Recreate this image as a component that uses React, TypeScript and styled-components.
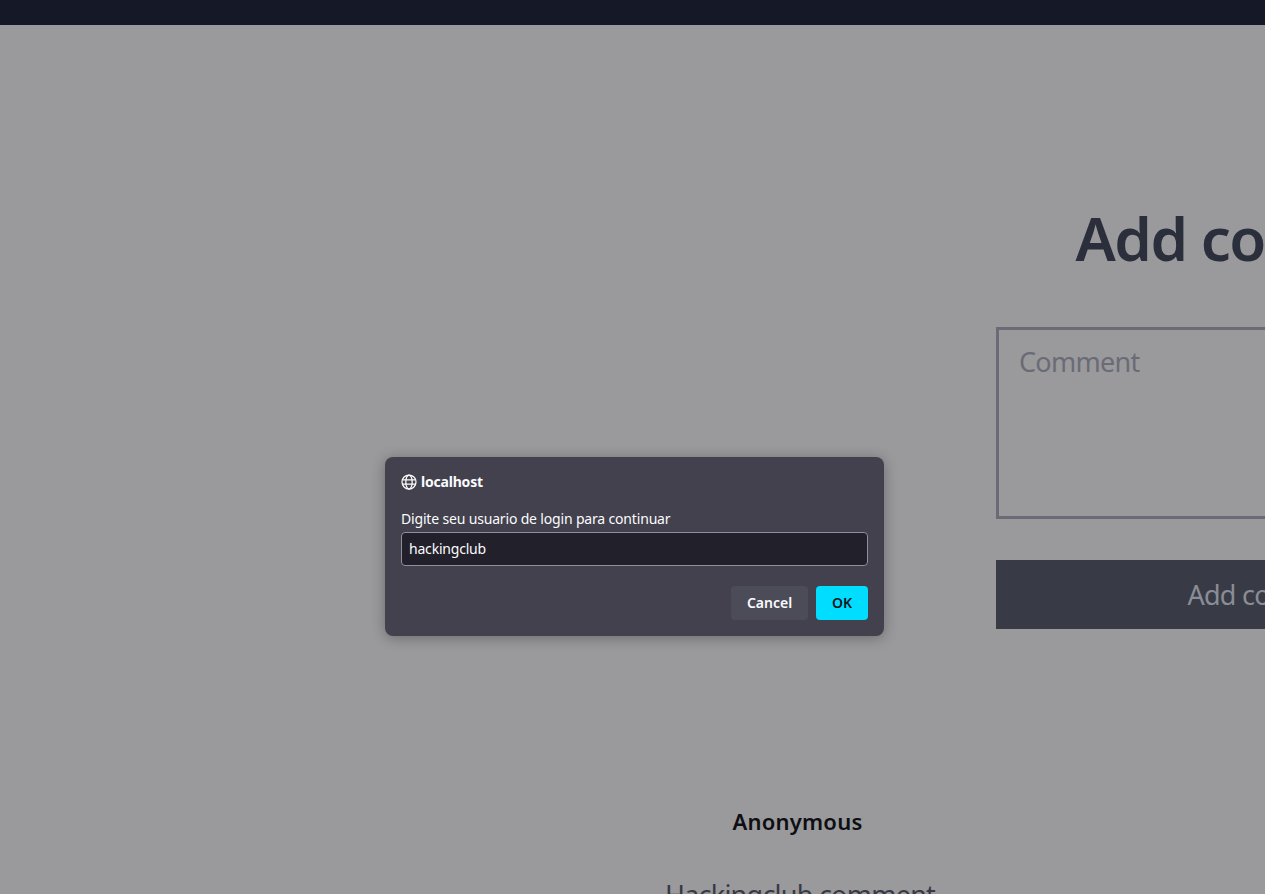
import React from "react";
import styled, { createGlobalStyle } from "styled-components";

const Global = createGlobalStyle`
  html, body { margin: 0; padding: 0; height: 100%; overflow: hidden; background: #9a9a9c; }
  #root { height: 100%; }
  * { box-sizing: border-box; }
`;

const Shell = styled.div`
  position: relative;
  width: 1265px;
  height: 894px;
  overflow: hidden;
  display: flex;
  flex-direction: column;
  font-family: "Noto Sans", sans-serif;
  background: #9a9a9c;
`;

const TopBar = styled.header`
  flex: 0 0 25px;
  background: #151826;
`;

const Page = styled.main`
  flex: 1;
  width: 1600px;
  display: flex;
  flex-direction: column;
`;

const FormSection = styled.section`
  width: 554px;
  margin-left: 996px;
  padding-top: 174px;
  display: flex;
  flex-direction: column;
`;

const Title = styled.h1`
  margin: 0 0 47px;
  height: 81px;
  font-size: 60px;
  line-height: 79px;
  font-weight: 600;
  letter-spacing: -1.45px;
  color: #2b2f3c;
  text-align: center;
  white-space: nowrap;
`;

const CommentBox = styled.div`
  height: 192px;
  border: 3px solid #6a6b76;
  padding: 13px 20px;
  font-size: 27px;
  line-height: 37px;
  letter-spacing: -0.7px;
  color: #6a6b76;
`;

const SubmitBar = styled.div`
  margin-top: 41px;
  height: 69px;
  background: #383b46;
  color: #8a8d96;
  font-size: 27px;
  line-height: 69px;
  letter-spacing: -0.7px;
  text-align: center;
`;

const CommentItem = styled.article`
  margin-top: 175px;
  width: 1600px;
  text-align: center;
`;

const Author = styled.div`
  width: 1595px;
  font-size: 22px;
  line-height: 34px;
  font-weight: 600;
  letter-spacing: 0.2px;
  color: #0e0f13;
`;

const CommentText = styled.p`
  margin: 38px 0 0;
  font-size: 27px;
  line-height: 37px;
  letter-spacing: -0.75px;
  color: #383945;
`;

const Dialog = styled.div`
  position: absolute;
  left: 385px;
  top: 457px;
  width: 499px;
  height: 179px;
  padding: 16px;
  border-radius: 8px;
  background: #42414d;
  box-shadow: 0 2px 14px rgba(0, 0, 0, 0.3);
  color: #fbfbfe;
  font-size: 14px;
  display: flex;
  flex-direction: column;
`;

const Host = styled.div`
  display: flex;
  align-items: center;
  gap: 4px;
  height: 17px;
  font-weight: 700;
  line-height: 17px;
  letter-spacing: -0.2px;
  color: #fbfbfe;
`;

const Prompt = styled.label`
  margin-top: 19px;
  height: 19px;
  line-height: 19px;
  letter-spacing: -0.17px;
`;

const Field = styled.div`
  margin-top: 4px;
  height: 34px;
  padding: 0 7px;
  border: 1px solid #8f8f9d;
  border-radius: 4px;
  background: #22202a;
  line-height: 32px;
  letter-spacing: -0.2px;
`;

const Actions = styled.div`
  margin-top: 20px;
  display: flex;
  justify-content: flex-end;
  gap: 8px;
`;

const Button = styled.button<{ $primary?: boolean }>`
  height: 34px;
  width: ${(p) => (p.$primary ? "52px" : "77px")};
  padding: 0 0 2px;
  border: 0;
  border-radius: 4px;
  font-family: inherit;
  font-size: 14px;
  font-weight: 600;
  background: ${(p) => (p.$primary ? "#00ddff" : "#4c4b58")};
  color: ${(p) => (p.$primary ? "#15141a" : "#fbfbfe")};
`;

const Globe = () => (
  <svg width="16" height="16" viewBox="0 0 16 16" fill="none" stroke="#fbfbfe" strokeWidth="1.25">
    <circle cx="8" cy="8" r="7" />
    <ellipse cx="8" cy="8" rx="3.2" ry="7" />
    <path d="M1.2 5.8h13.6M1.2 10.2h13.6" />
  </svg>
);

export default function App() {
  return (
    <Shell>
      <Global />
      <TopBar />
      <Page>
        <FormSection>
          <Title>Add comment</Title>
          <CommentBox>Comment</CommentBox>
          <SubmitBar>Add comment</SubmitBar>
        </FormSection>
        <CommentItem>
          <Author>Anonymous</Author>
          <CommentText>Hackingclub comment</CommentText>
        </CommentItem>
      </Page>
      <Dialog>
        <Host>
          <Globe />
          localhost
        </Host>
        <Prompt>Digite seu usuario de login para continuar</Prompt>
        <Field>hackingclub</Field>
        <Actions>
          <Button>Cancel</Button>
          <Button $primary>OK</Button>
        </Actions>
      </Dialog>
    </Shell>
  );
}
